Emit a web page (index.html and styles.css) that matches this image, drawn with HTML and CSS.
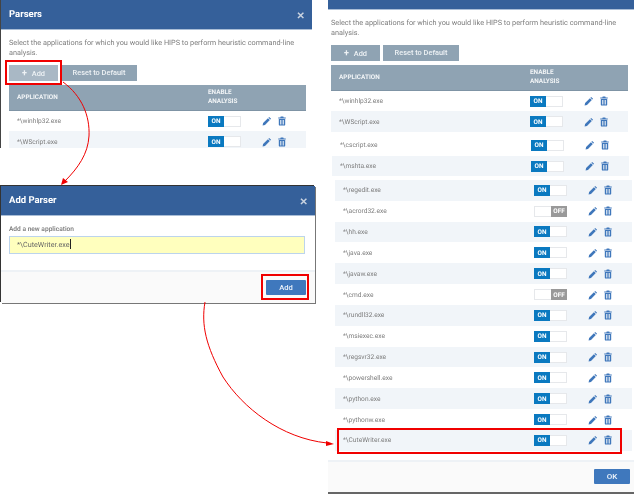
FILE: index.html
```html
<!DOCTYPE html>
<html lang="en">
<head>
<meta charset="utf-8">
<title>Parsers</title>
<link rel="stylesheet" href="styles.css">
</head>
<body>
<svg class="defs" width="0" height="0" aria-hidden="true">
  <symbol id="pen" viewBox="0 0 12 12"><path d="M8.6 1.1 10.9 3.4 10 4.3 7.7 2ZM7.1 2.6 9.4 4.9 3.6 10.7 0.7 11.3 1.3 8.4Z"/></symbol>
  <symbol id="bin" viewBox="0 0 10 12"><path d="M3.4 0.4H6.6L7.1 1.5H9.7V2.8H0.3V1.5H2.9ZM1 3.5H9V10.6C9 11.3 8.5 11.7 7.9 11.7H2.1C1.5 11.7 1 11.3 1 10.6ZM2.6 4.8V10.3H3.5V4.8ZM4.6 4.8V10.3H5.4V4.8ZM6.5 4.8V10.3H7.4V4.8Z"/></symbol>
</svg>

<section class="window win-parsers">
  <header class="head head-tall"><h2>Parsers</h2><span class="close">&#10005;</span></header>
  <div class="body">
    <p class="intro">Select the applications for which you would like HIPS to perform heuristic command-line analysis.</p>
    <div class="tools">
      <button class="tool tool-add tool-hover"><b>+</b> Add</button>
      <button class="tool tool-reset">Reset to Default</button>
    </div>
    <div class="thead"><span>APPLICATION</span><span>ENABLE<br>ANALYSIS</span></div>
    <div class="group">
      <div class="row"><span>*\winhlp32.exe</span><span class="sw"><i>ON</i><u></u></span><span class="acts"><svg class="pen"><use href="#pen"/></svg><svg class="bin"><use href="#bin"/></svg></span></div>
      <div class="row alt"><span>*\WScript.exe</span><span class="sw"><i>ON</i><u></u></span><span class="acts"><svg class="pen"><use href="#pen"/></svg><svg class="bin"><use href="#bin"/></svg></span></div>
    </div>
  </div>
</section>

<section class="window win-add">
  <header class="head head-tall"><h2>Add Parser</h2><span class="close">&#10005;</span></header>
  <div class="add-body">
    <label class="add-label" for="app">Add a new application</label>
    <div class="input" id="app">*\CuteWriter.exe<span class="caret"></span></div>
  </div>
  <footer class="foot foot-add"><button class="primary primary-add">Add</button></footer>
</section>

<section class="window win-main">
  <header class="head head-short"></header>
  <div class="body body-main">
    <p class="intro">Select the applications for which you would like HIPS to perform heuristic command-line analysis.</p>
    <div class="tools">
      <button class="tool tool-add"><b>+</b> Add</button>
      <button class="tool tool-reset">Reset to Default</button>
    </div>
    <div class="thead"><span>APPLICATION</span><span>ENABLE<br>ANALYSIS</span></div>
    <div class="group">
      <div class="row"><span>*\winhlp32.exe</span><span class="sw"><i>ON</i><u></u></span><span class="acts"><svg class="pen"><use href="#pen"/></svg><svg class="bin"><use href="#bin"/></svg></span></div>
      <div class="row alt"><span>*\WScript.exe</span><span class="sw"><i>ON</i><u></u></span><span class="acts"><svg class="pen"><use href="#pen"/></svg><svg class="bin"><use href="#bin"/></svg></span></div>
    </div>
    <div class="group group-b">
      <div class="row"><span>*\cscript.exe</span><span class="sw"><i>ON</i><u></u></span><span class="acts"><svg class="pen"><use href="#pen"/></svg><svg class="bin"><use href="#bin"/></svg></span></div>
      <div class="row alt"><span>*\mshta.exe</span><span class="sw"><i>ON</i><u></u></span><span class="acts"><svg class="pen"><use href="#pen"/></svg><svg class="bin"><use href="#bin"/></svg></span></div>
    </div>
    <div class="group group-c">
      <div class="row alt"><span>*\regedit.exe</span><span class="sw"><i>ON</i><u></u></span><span class="acts"><svg class="pen"><use href="#pen"/></svg><svg class="bin"><use href="#bin"/></svg></span></div>
      <div class="row"><span>*\acrord32.exe</span><span class="sw off"><u></u><i>OFF</i></span><span class="acts"><svg class="pen"><use href="#pen"/></svg><svg class="bin"><use href="#bin"/></svg></span></div>
      <div class="row alt"><span>*\hh.exe</span><span class="sw"><i>ON</i><u></u></span><span class="acts"><svg class="pen"><use href="#pen"/></svg><svg class="bin"><use href="#bin"/></svg></span></div>
      <div class="row"><span>*\java.exe</span><span class="sw"><i>ON</i><u></u></span><span class="acts"><svg class="pen"><use href="#pen"/></svg><svg class="bin"><use href="#bin"/></svg></span></div>
      <div class="row alt"><span>*\javaw.exe</span><span class="sw"><i>ON</i><u></u></span><span class="acts"><svg class="pen"><use href="#pen"/></svg><svg class="bin"><use href="#bin"/></svg></span></div>
      <div class="row"><span>*\cmd.exe</span><span class="sw off"><u></u><i>OFF</i></span><span class="acts"><svg class="pen"><use href="#pen"/></svg><svg class="bin"><use href="#bin"/></svg></span></div>
      <div class="row alt"><span>*\rundll32.exe</span><span class="sw"><i>ON</i><u></u></span><span class="acts"><svg class="pen"><use href="#pen"/></svg><svg class="bin"><use href="#bin"/></svg></span></div>
      <div class="row"><span>*\msiexec.exe</span><span class="sw"><i>ON</i><u></u></span><span class="acts"><svg class="pen"><use href="#pen"/></svg><svg class="bin"><use href="#bin"/></svg></span></div>
      <div class="row alt"><span>*\regsvr32.exe</span><span class="sw"><i>ON</i><u></u></span><span class="acts"><svg class="pen"><use href="#pen"/></svg><svg class="bin"><use href="#bin"/></svg></span></div>
      <div class="row"><span>*\powershell.exe</span><span class="sw"><i>ON</i><u></u></span><span class="acts"><svg class="pen"><use href="#pen"/></svg><svg class="bin"><use href="#bin"/></svg></span></div>
      <div class="row alt"><span>*\python.exe</span><span class="sw"><i>ON</i><u></u></span><span class="acts"><svg class="pen"><use href="#pen"/></svg><svg class="bin"><use href="#bin"/></svg></span></div>
      <div class="row"><span>*\pythonw.exe</span><span class="sw"><i>ON</i><u></u></span><span class="acts"><svg class="pen"><use href="#pen"/></svg><svg class="bin"><use href="#bin"/></svg></span></div>
      <div class="row alt"><span>*\CuteWriter.exe</span><span class="sw"><i>ON</i><u></u></span><span class="acts"><svg class="pen"><use href="#pen"/></svg><svg class="bin"><use href="#bin"/></svg></span></div>
    </div>
  </div>
  <footer class="foot foot-main"><button class="primary primary-ok">OK</button></footer>
</section>

<div class="mark mark-add"></div>
<div class="mark mark-confirm"></div>
<div class="mark mark-row"></div>

<svg class="arrows" width="644" height="500" viewBox="0 0 644 500" aria-hidden="true">
  <path class="line" d="M63 82C82 96 90 116 89 136C88 154 78 168 65 181"/>
  <path class="tip" d="M61 185 63 178 68 182Z"/>
  <path class="line" d="M205 302C201 325 206 346 223 377C243 408 281 438 327 443"/>
  <path class="tip" d="M334 444 326 441 326 446Z"/>
</svg>
</body>
</html>
```
FILE: styles.css
```css
* { box-sizing: border-box; }
html, body { margin: 0; padding: 0; }
body { width: 644px; height: 500px; background: #fff; position: relative; overflow: hidden; font-family: Roboto, "Liberation Sans", sans-serif; color: #777; text-rendering: geometricPrecision; }
.defs { position: absolute; }
.window { position: absolute; background: #fff; filter: blur(0.3px); }
.win-parsers { left: 1px; top: 0; width: 311px; height: 148px; overflow: hidden; box-shadow: -1px 0 0 #444; }
.win-add { left: 1px; top: 186px; width: 314px; height: 117px; box-shadow: -1px -1px 0 #333, 1px 1px 0 #777; display: flex; flex-direction: column; }
.win-main { left: 328px; top: 0; width: 306px; height: 494px; border-bottom: 2px solid #666; display: flex; flex-direction: column; }

.head { background: #35609a; border-bottom: 1px solid #a9bdd6; display: flex; justify-content: space-between; align-items: center; color: #fff; }
.head-tall { height: 30px; padding: 0 7px 0 8px; }
.head-short { height: 10px; flex: none; }
.head h2 { margin: 0; font-size: 9.5px; font-weight: 700; }
.close { font-size: 10px; font-weight: 700; color: #c9d3e0; padding: 3px 0 0 0; }

.body { padding: 8px 0 0 8px; }
.body-main { padding: 8px 0 0 3px; flex: 1; }
.intro { margin: 0 0 6px; width: 296px; font-size: 7.3px; line-height: 10.3px; color: #7d7d7d; }
.tools { display: flex; gap: 3px; margin-bottom: 4px; }
.tool { height: 16px; border: 0; padding: 0; font: 500 7.4px Roboto, sans-serif; color: #eef2f5; background: #8fa3b3; }
.tool b { font-size: 9px; margin-right: 3px; }
.tool-add { width: 49px; }
.tool-hover { background: #a9b8c5; }
.tool-reset { width: 76px; }
.thead { width: 297px; height: 26px; background: #8fa3b3; display: grid; grid-template-columns: 191px 1fr; align-items: center; padding-left: 8px; color: #f2f5f7; font-size: 6.4px; font-weight: 700; line-height: 9px; border-bottom: 1px solid #7f94a5; }

.group { width: 297px; }
.group-b { margin: 2.5px 0 0 1px; }
.group-c { margin: 3.4px 0 0 4px; }
.row { height: 20.85px; display: grid; grid-template-columns: 191px 54px 1fr; align-items: center; padding-left: 8px; font-size: 6.6px; color: #7d7d7d; }
.alt { background: #f1f5f9; }
.sw { display: flex; width: 33px; height: 11px; border: 1px solid #e6e8eb; font-size: 6.4px; font-weight: 700; }
.sw i { width: 16px; margin: -1px 0 -1px -1px; display: flex; align-items: center; justify-content: center; font-style: normal; color: #fff; background: #0a79c0; }
.sw u { flex: 1; background: #fff; }
.sw.off i { margin: -1px -1px -1px 0; background: #999; }
.acts { display: flex; align-items: center; gap: 6px; }
.acts svg { fill: #3f77bb; flex: none; }
.pen { width: 10px; height: 10px; }
.bin { width: 8px; height: 10px; }

.add-body { flex: 1; padding: 9px 8px 0; border-bottom: 2px solid #eef2f6; }
.add-label { display: block; font-size: 6.6px; font-weight: 500; color: #777; margin-bottom: 3px; line-height: 8px; }
.input { height: 18px; background: #ffffbe; border: 1px solid #bcd4ec; padding-left: 7px; font-size: 7.2px; line-height: 16px; color: #666; width: 296px; }
.caret { display: inline-block; width: 1px; height: 10px; background: #222; vertical-align: -2px; }
.foot { flex: none; background: #fafafa; display: flex; }
.foot-add { height: 31px; padding: 8px 0 0 265px; }
.foot-main { height: 32px; padding: 7px 0 0 266px; border-top: 2px solid #eef2f6; }
.primary { border: 0; padding: 0; background: #3f78bd; color: #eef4fb; font: 500 7.6px Roboto, sans-serif; border-radius: 1px; height: 15px; }
.primary-add { width: 40px; }
.primary-ok { width: 36px; font-size: 8px; }

.mark { position: absolute; border: 2px solid #f00000; }
.mark-add { left: 5px; top: 60px; width: 57px; height: 25px; }
.mark-confirm { left: 261px; top: 274px; width: 48px; height: 26px; }
.mark-row { left: 337px; top: 428px; width: 285px; height: 26px; }
.arrows { position: absolute; left: 0; top: 0; pointer-events: none; }
.line { fill: none; stroke: #f00000; stroke-width: 1; }
.tip { fill: #f00000; }
```
